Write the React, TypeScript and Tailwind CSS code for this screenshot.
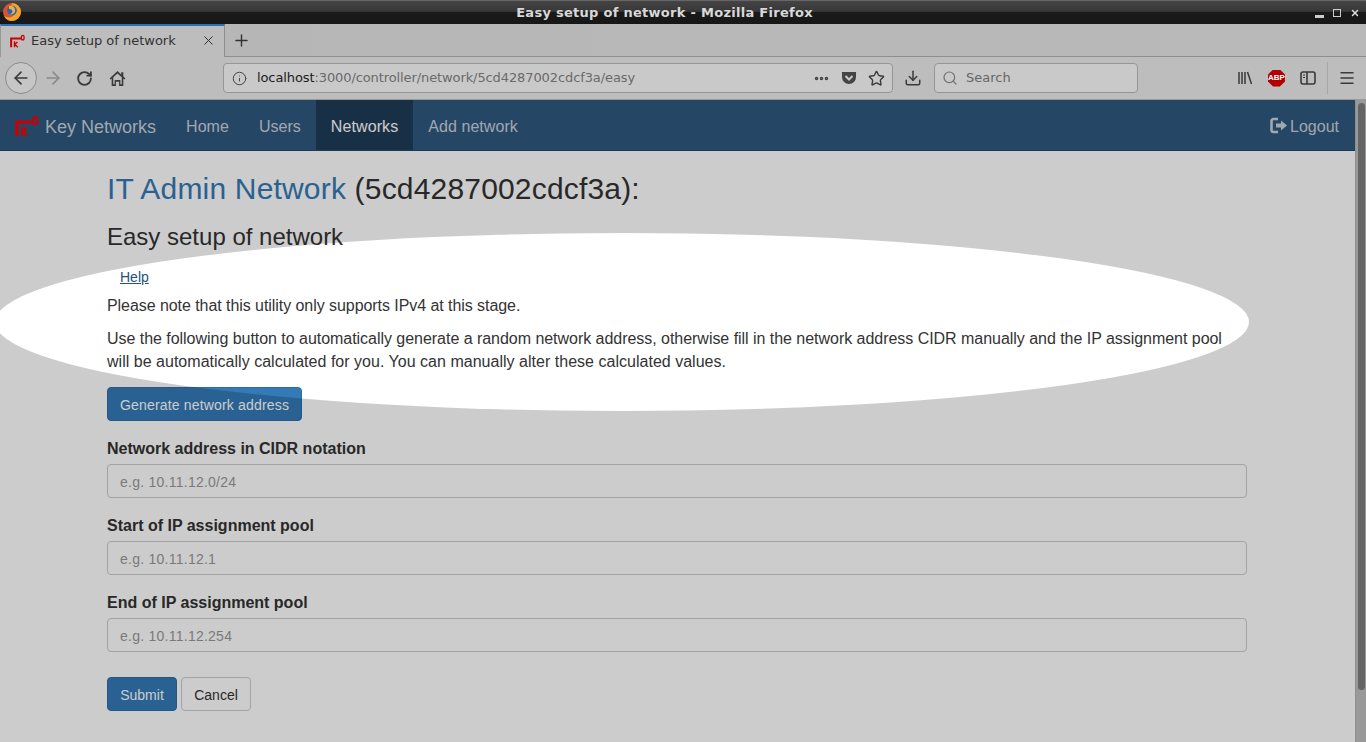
import { ArrowLeft, ArrowRight, RotateCw, Info, Star, Download, Search, Menu, X, Plus, Ellipsis } from "lucide-react";

const Key = ({ className }: { className: string }) => (
  <svg viewBox="0 0 24 20" className={className} fill="none" stroke="currentColor">
    <path d="M1.800 20V6H17.500" strokeWidth="3.200" />
    <ellipse cx="20.300" cy="4.700" rx="2.300" ry="3.600" strokeWidth="2" />
    <path d="M7.200 10.500V20M7.200 15.500l4.800-4M7.500 15l5 5" strokeWidth="2.200" />
  </svg>
);

const Firefox = () => (
  <svg viewBox="1 1 18 18" className="w-[18px] h-[18px]">
    <circle cx="10" cy="10" r="9" fill="#d9532c" />
    <path d="M10 1a9 9 0 0 1 9 9 9 9 0 0 1-9 9 9 9 0 0 1-8-5c3 2 8 2 10-1 2-2 1-6-3-8z" fill="#f2a32b" />
    <circle cx="10" cy="8.500" r="4.800" fill="#2a5fc0" />
    <path d="M7 4c4-1 7 2 6 6-1 2-4 3-6 2 3 0 4-2 3-4-1-1-2-1-3-1z" fill="#e8b33a" />
  </svg>
);

const Field = ({ label, placeholder }: { label: string; placeholder: string }) => (
  <div className="flex flex-col mb-[16px]">
    <label className="text-[16px] font-bold leading-[23px] mb-[4px] text-[#333]">{label}</label>
    <input
      placeholder={placeholder}
      className="h-[34px] w-full rounded-[4px] border border-[#ccc] bg-white px-3 pt-[2px] text-[14px] tracking-[0.25px] outline-none placeholder:text-[#999]"
    />
  </div>
);

export default function App() {
  return (
    <div className="h-[742px] w-[1366px] overflow-hidden flex flex-col bg-[#bdbdbd] font-['Liberation_Sans',sans-serif]">
      {/* window title bar */}
      <div className="h-[24px] shrink-0 relative flex items-center justify-center pr-[37px] border-t border-t-[#666] bg-[linear-gradient(#444_0%,#383838_45%,#1a1a1a_50%,#171717_100%)]">
        <div className="absolute left-[3px] top-[2px]"><Firefox /></div>
        <span className="text-[13px] font-bold text-[#d8d8d8] font-['DejaVu_Sans',sans-serif] tracking-[0.28px]">Easy setup of network - Mozilla Firefox</span>
        <div className="absolute right-[6px] top-[7px] flex items-center gap-[9px] text-[#ddd]">
          <div className="w-[9px] h-[9px] flex items-end"><div className="w-full h-[3px] bg-[#ccc]" /></div>
          <div className="w-[8px] h-[8px] border border-[#ccc]" />
          <X size={10} strokeWidth={3.5} />
        </div>
      </div>
      {/* tab strip */}
      <div className="h-[33px] shrink-0 flex bg-[linear-gradient(90deg,#b6b6b6,#b9b9b9)] border-b border-b-[#8f8f8f]">
        <div className="w-[225px] h-[33px] flex items-center pl-[9px] pr-[8px] pb-[2px] border-t-2 border-t-[#2a6eb4] border-r border-r-[#8f8f8f] border-l border-l-[#999] bg-[#bdbdbd] z-10">
          <Key className="w-[15px] h-[14px] shrink-0 text-[#cc0000]" />
          <span className="ml-[6px] text-[13px] text-[#333] flex-1 font-['DejaVu_Sans',sans-serif]">Easy setup of network</span>
          <X size={15} className="text-[#333]" strokeWidth={1.6} />
        </div>
        <div className="w-[33px] flex items-center justify-center text-[#333]"><Plus size={19} strokeWidth={1.8} /></div>
      </div>
      {/* nav toolbar */}
      <div className="h-[43px] shrink-0 flex items-center bg-[#bdbdbd] border-b border-b-[#999] text-[#3a3a3a]">
        <div className="ml-[5px] w-[32px] h-[32px] rounded-full border border-[#8b8b8b] bg-[#c6c6c6] flex items-center justify-center">
          <ArrowLeft size={20} strokeWidth={2} />
        </div>
        <ArrowRight size={20} strokeWidth={2} className="ml-[6px] text-[#8a8a8a]" />
        <RotateCw size={17} strokeWidth={2.6} className="ml-[13px]" />
        <svg viewBox="0 0 16 16" className="ml-[16px] w-[17px] h-[17px]" fill="#3a3a3a">
          <path d="M8 1 0.5 8l1 1L2.500 8v7h4v-4h3v4h4V8l1 1 1-1-2-1.900V2h-2v2.200zM4 13.500V6.800l4-3.600 4 3.600v6.700h-1.300v-4H5.300v4z" />
        </svg>
        <div className="ml-[97px] w-[670px] h-[30px] rounded-[4px] border border-[#969696] bg-[#c9c9c9] flex items-center pl-[8px] pr-[7px]">
          <Info size={15} strokeWidth={1.6} className="text-[#444]" />
          <span className="ml-[10px] text-[13px] text-[#6a6a6a] flex-1 font-['DejaVu_Sans',sans-serif] tracking-[-0.1px]"><span className="text-[#1c1c1c]">localhost</span>:3000/controller/network/5cd4287002cdcf3a/easy</span>
          <Ellipsis size={17} strokeWidth={3} className="text-[#444]" />
          <svg viewBox="0 0 16 16" className="ml-[11px] w-[16px] h-[16px]"><path d="M1 2h14a1 1 0 0 1 0 1v4a7 7 0 0 1-14 0V3a1 1 0 0 1 0-1z" fill="#444" /><path d="M4.500 6 8 9.500 11.500 6" stroke="#c9c9c9" strokeWidth="2" fill="none" /></svg>
          <Star size={17} strokeWidth={2} className="ml-[11px]" />
        </div>
        <Download size={18} strokeWidth={2} className="ml-[11px]" />
        <div className="ml-[12px] w-[204px] h-[30px] rounded-[4px] border border-[#969696] bg-[#c9c9c9] flex items-center pl-[7px]">
          <Search size={16} strokeWidth={1.8} className="text-[#707070]" />
          <span className="ml-[8px] text-[13px] text-[#666] font-['DejaVu_Sans',sans-serif]">Search</span>
        </div>
        <svg viewBox="0 0 16 16" className="ml-[99px] w-[16px] h-[16px]" stroke="#3a3a3a" strokeWidth="1.500" fill="none"><path d="M2 2v12M5 2v12M8 2v12M10.500 2l4 12" /></svg>
        <div className="ml-[15px] w-[17px] h-[17px] bg-[#b00000] [clip-path:polygon(30%_0,70%_0,100%_30%,100%_70%,70%_100%,30%_100%,0_70%,0_30%)] flex items-center justify-center text-[8px] font-bold text-white leading-none">ABP</div>
        <svg viewBox="0 0 16 16" className="ml-[15px] w-[16px] h-[16px]" stroke="#3a3a3a" strokeWidth="1.600" fill="none"><rect x="1" y="2" width="14" height="12" rx="2" /><path d="M7 2v12" /><path d="M3 5h2M3 7.500h2" strokeWidth="1" /></svg>
        <div className="ml-[11px] w-px h-[32px] bg-[#a6a6a6]" />
        <Menu size={18} strokeWidth={2} className="ml-[10px]" />
      </div>
      {/* viewport */}
      <div className="flex-1 flex min-h-0">
        <div className="relative w-[1355px] overflow-hidden bg-white">
          <nav className="h-[51px] bg-[#2f597f] border-b border-b-[#28486c] flex text-[16px] text-[#c8d2db] tracking-[0.05px]">
            <div className="flex items-center pl-[15px] pr-[15px] pt-[4px]">
              <Key className="w-[24px] h-[20px] mb-[2px] text-[#ff0000]" />
              <span className="ml-[6px] text-[18px] tracking-normal">Key Networks</span>
            </div>
            <span className="px-[15px] pt-[4px] flex items-center">Home</span>
            <span className="px-[15px] pt-[4px] flex items-center tracking-normal">Users</span>
            <span className="px-[15px] pt-[4px] flex items-center bg-[#1f3d58] text-white tracking-[0.12px]">Networks</span>
            <span className="px-[15px] pt-[4px] flex items-center">Add network</span>
            <span className="ml-auto pr-[16px] pt-[4px] flex items-center gap-[3px] tracking-normal">
              <svg viewBox="0 0 17 17" className="w-[17px] h-[17px] mb-[3px]" fill="none" stroke="#c8d2db">
                <path d="M8 2H3.500A2 2 0 0 0 1.500 4v9a2 2 0 0 0 2 2H8" strokeWidth="2.600" />
                <path d="M11 3.500 17 8.500 11 13.500V10.500H6V6.500H11z" fill="#c8d2db" strokeWidth="0" />
              </svg>
              Logout
            </span>
          </nav>
          <main className="pl-[107px] pr-[108px] text-[16px] leading-[23px] text-[#333]">
            <h1 className="mt-[20px] mb-[10px] text-[30px] leading-[36px] font-medium tracking-[0.18px]"><span className="text-[#337ab7]">IT Admin Network</span> (5cd4287002cdcf3a):</h1>
            <h2 className="mt-[17px] mb-[10px] text-[24px] leading-[26px]">Easy setup of network</h2>
            <div className="pl-[13px] mt-[15px] mb-[6px]"><a className="text-[14px] leading-[20px] text-[#23527c] underline">Help</a></div>
            <p className="mb-[10px] tracking-[-0.06px]">Please note that this utility only supports IPv4 at this stage.</p>
            <p className="mb-[14px]">
              <span className="block tracking-[-0.035px]">Use the following button to automatically generate a random network address, otherwise fill in the network address CIDR manually and the IP assignment pool</span>
              <span className="block tracking-[0.02px]">will be automatically calculated for you. You can manually alter these calculated values.</span>
            </p>
            <button className="h-[34px] px-3 pt-[2px] rounded-[4px] border border-[#2e6da4] bg-[#337ab7] text-white text-[14px] tracking-[0.17px] block mb-[16px]">Generate network address</button>
            <Field label="Network address in CIDR notation" placeholder="e.g. 10.11.12.0/24" />
            <Field label="Start of IP assignment pool" placeholder="e.g. 10.11.12.1" />
            <Field label="End of IP assignment pool" placeholder="e.g. 10.11.12.254" />
            <div className="flex gap-[4px] mt-[25px]">
              <button className="h-[34px] w-[70px] pt-[2px] rounded-[4px] border border-[#2e6da4] bg-[#337ab7] text-white text-[14px]">Submit</button>
              <button className="h-[34px] w-[70px] pt-[2px] rounded-[4px] border border-[#ccc] bg-white text-[#333] text-[14px]">Cancel</button>
            </div>
          </main>
          {/* tour overlay */}
          <div className="absolute left-[-5px] top-[133px] w-[1254px] h-[178px] rounded-[50%] shadow-[0_0_0_2000px_rgba(0,0,0,0.2)] pointer-events-none" />
        </div>
        <div className="w-[11px] bg-[#999] flex justify-center border-l border-l-[#8f8f8f] pt-[3px]">
          <div className="w-[7px] h-[587px] rounded-[4px] bg-[#656565]" />
        </div>
      </div>
    </div>
  );
}
